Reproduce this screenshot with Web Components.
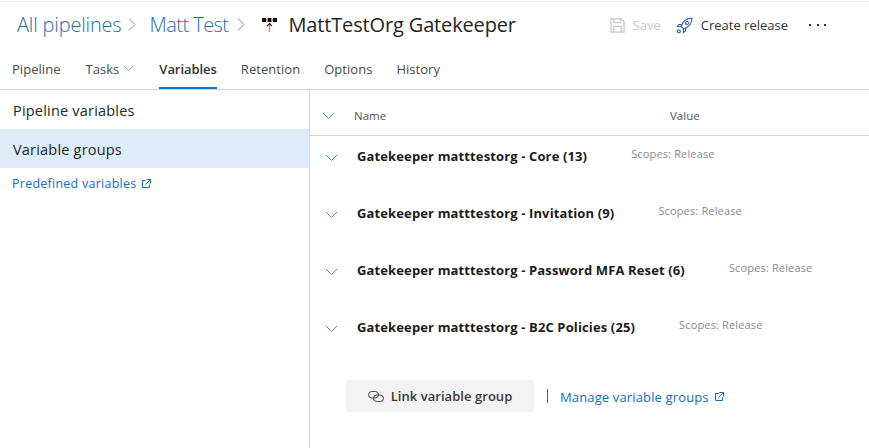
<!DOCTYPE html>
<html>
<head>
<meta charset="utf-8">
<title>MattTestOrg Gatekeeper</title>
<style>
  html, body { margin: 0; padding: 0; background: #fff; }
  body { font-family: "Open Sans", "Noto Sans", sans-serif; color: #212121; width: 869px; height: 448px; overflow: hidden; }
</style>
</head>
<body>
<pipeline-page></pipeline-page>

<script>
const EXTERNAL_ICON = `<svg width="9" height="9" viewBox="0 0 9 9" fill="none" stroke="#106ebe" stroke-width="1"><path d="M3.5 1.5H.5v7h7v-3M4.5 .5h4v4M8.5 .5L3.5 5.5"/></svg>`;
const CRUMB_CHEVRON = `<svg width="8" height="13" viewBox="0 0 8 13" fill="none" stroke="#8a8a8a"><path d="M1 .5l6 6-6 6"/></svg>`;

class PipelineHeader extends HTMLElement {
    connectedCallback() {
        this.attachShadow({ mode: 'open' });
        this.shadowRoot.innerHTML = `
            <style>
                :host { display: flex; align-items: center; height: 44px; margin-top: 1px; padding: 0 43px 6px 17px; border-top: 1px solid #ececec; }
                .crumb { font-size: 20px; font-weight: 300; color: #1f6ea8; letter-spacing: -0.17px; }
                .crumb.matt { letter-spacing: -0.55px; }
                .sep { display: flex; }
                .title { font-size: 20px; letter-spacing: -0.15px; color: #252525; }
                .pipe-icon { margin: 0 11px 0 0; display: flex; }
                .actions { margin-left: auto; display: flex; align-items: center; font-size: 13px; margin-top: 2px; }
                .save { color: #c8c8c8; margin-left: 8px; margin-right: 15px; }
                .create { color: #333; margin-left: 8px; margin-right: 21px; }
                .more { display: flex; gap: 5.5px; }
                .more i { width: 2px; height: 2px; background: #333; display: block; }
                svg { display: block; }
            </style>
            <span class="crumb">All pipelines</span>
            <span class="sep" style="margin: 0 14px 0 6px">${CRUMB_CHEVRON}</span>
            <span class="crumb matt">Matt Test</span>
            <span class="sep" style="margin: 0 17px 0 9px">${CRUMB_CHEVRON}</span>
            <span class="pipe-icon"><svg width="15" height="15" viewBox="0 0 15 15">
                <path d="M0 1h4v4H0zM5.500 1h4v4h-4zM11 1h4v4h-4z" fill="#111"/>
                <path d="M4 2h1.500v2H4zM9.500 2H11v2H9.500z" fill="#e8a33d"/>
                <path d="M7.500 6.500V15" stroke="#d98a1f" stroke-width="1.300"/>
                <path d="M5 9l2.500-2.500L10 9" fill="none" stroke="#222" stroke-width="1.100"/>
            </svg></span>
            <span class="title">MattTestOrg Gatekeeper</span>
            <div class="actions">
                <svg width="15" height="15" viewBox="0 0 16 16" fill="none" stroke="#c8c8c8" stroke-width="1.400"><path d="M1 1h11l3 3v11H1z"/><path d="M4 1v4h7V1M4 15V9h8v6"/></svg>
                <span class="save">Save</span>
                <svg width="17" height="17" viewBox="0 0 17 17" fill="none" stroke="#1d5fbf" stroke-width="1.100"><path d="M5 9.500C6.500 5 10 1.500 16 1c-.3 6-3.800 9.500-8.300 11z"/><circle cx="11" cy="6" r="1.500"/><path d="M5.800 7.500H3L1.500 9.500 5 9.800M9.500 11.300V14l-2 1.500-.3-3.500"/><circle cx="2.800" cy="14.200" r="1.500"/></svg>
                <span class="create">Create release</span>
                <span class="more"><i></i><i></i><i></i></span>
            </div>
        `;
    }
}

class PipelineTabs extends HTMLElement {
    connectedCallback() {
        this.attachShadow({ mode: 'open' });
        this.shadowRoot.innerHTML = `
            <style>
                :host { display: flex; height: 37px; padding-left: 12px; border-bottom: 1px solid #d4d4d4; font-size: 13px; letter-spacing: 0.04px; color: #4a4a4a; }
                a { display: flex; align-items: center; margin-right: 24px; color: inherit; padding-bottom: 4px; box-sizing: border-box; height: 37px; }
                a.active { font-weight: 600; color: #333; border-bottom: 2px solid #0078d4; letter-spacing: -0.05px; padding-bottom: 2px; }
                a.tasks { margin-left: 1px; margin-right: 25px; }
                svg { margin-left: 4px; }
            </style>
            <a>Pipeline</a>
            <a class="tasks">Tasks<svg width="11" height="7" viewBox="0 0 11 7" fill="none" stroke="#a6a6a6"><path d="M1 1l4.500 4.500L10 1"/></svg></a>
            <a class="active">Variables</a>
            <a>Retention</a>
            <a>Options</a>
            <a>History</a>
        `;
    }
}

class VarSidebar extends HTMLElement {
    connectedCallback() {
        this.attachShadow({ mode: 'open' });
        this.shadowRoot.innerHTML = `
            <style>
                :host { display: block; width: 310px; height: 358px; padding-top: 1px; box-sizing: border-box; border-right: 1px solid #d4d4d4; }
                .item { height: 38px; display: flex; align-items: center; padding-left: 13px; font-size: 14.500px; letter-spacing: 0.2px; color: #252525; }
                .item.on { background: #deecf9; height: 39px; padding-top: 1px; box-sizing: border-box; }
                .link { display: flex; align-items: center; margin: 7px 0 0 12px; font-size: 12.500px; color: #106ebe; letter-spacing: 0.25px; height: 16px; }
                svg { margin-left: 6px; }
            </style>
            <div class="item">Pipeline variables</div>
            <div class="item on">Variable groups</div>
            <a class="link">Predefined variables ${EXTERNAL_ICON}</a>
        `;
    }
}

class VarGroup extends HTMLElement {
    connectedCallback() {
        const color = this.getAttribute('tone') === 'rose' ? '#b0708a' : '#3f8fd0';
        this.attachShadow({ mode: 'open' });
        this.shadowRoot.innerHTML = `
            <style>
                :host { display: flex; align-items: flex-start; height: 57px; padding-left: 15px; box-sizing: border-box; }
                svg { display: block; margin-top: 6px; }
                .name { margin-left: 19px; font-size: 13px; font-weight: 700; color: #1a1a1a; letter-spacing: 0.13px; line-height: 17px; }
                .scope { margin-left: 44px; font-size: 11px; color: #8a8a8a; letter-spacing: 0.15px; line-height: 14px; margin-top: -1px; }
            </style>
            <svg width="13" height="8" viewBox="0 0 13 8" fill="none" stroke="${color}"><path d="M1 1l5.500 5.500L12 1"/></svg>
            <span class="name">${this.getAttribute('name')}</span>
            <span class="scope">Scopes: Release</span>
        `;
    }
}

class VarGroups extends HTMLElement {
    connectedCallback() {
        this.attachShadow({ mode: 'open' });
        this.shadowRoot.innerHTML = `
            <style>
                :host { display: block; flex: 1; }
                .head { display: flex; align-items: center; height: 39px; padding-top: 6px; border-bottom: 1px solid #d4d4d4; padding-left: 12px; font-size: 11.500px; color: #555; }
                .head svg { margin-top: 1px; }
                .head .n { margin-left: 19px; width: 316px; }
                .list { padding-top: 12px; }
                .foot { display: flex; align-items: center; margin-left: 36px; margin-top: 4px; }
                button { all: unset; box-sizing: border-box; width: 188px; height: 32px; background: #f3f3f3; display: flex; align-items: center; justify-content: center; gap: 7px; font: 600 13px "Open Sans", sans-serif; letter-spacing: 0.05px; color: #3a3a3a; }
                .bar { width: 1px; height: 14px; background: #106ebe; margin: 0 12px 0 13px; }
                a { color: #106ebe; font-size: 13px; letter-spacing: 0.14px; display: flex; align-items: center; gap: 6px; padding-top: 1px; }
                svg { display: block; }
            </style>
            <div class="head">
                <svg width="13" height="8" viewBox="0 0 13 8" fill="none" stroke="#3f8fd0"><path d="M1 1l5.500 5.500L12 1"/></svg>
                <span class="n">Name</span><span>Value</span>
            </div>
            <div class="list">
                <var-group name="Gatekeeper matttestorg - Core (13)"></var-group>
                <var-group tone="rose" name="Gatekeeper matttestorg - Invitation (9)"></var-group>
                <var-group name="Gatekeeper matttestorg - Password MFA Reset (6)"></var-group>
                <var-group tone="rose" name="Gatekeeper matttestorg - B2C Policies (25)"></var-group>
            </div>
            <div class="foot">
                <button><svg width="16" height="11" viewBox="0 0 16 11" fill="none" stroke="#444"><rect x=".5" y=".5" width="10" height="6.500" rx="3.250"/><rect x="5.500" y="4" width="10" height="6.500" rx="3.250"/></svg>Link variable group</button>
                <span class="bar"></span>
                <a>Manage variable groups ${EXTERNAL_ICON}</a>
            </div>
        `;
    }
}

class PipelinePage extends HTMLElement {
    connectedCallback() {
        this.attachShadow({ mode: 'open' });
        this.shadowRoot.innerHTML = `
            <style>
                :host { display: block; width: 869px; height: 448px; }
                .body { display: flex; }
            </style>
            <pipeline-header></pipeline-header>
            <pipeline-tabs></pipeline-tabs>
            <div class="body"><var-sidebar></var-sidebar><var-groups></var-groups></div>
        `;
    }
}

customElements.define('pipeline-header', PipelineHeader);
customElements.define('pipeline-tabs', PipelineTabs);
customElements.define('var-sidebar', VarSidebar);
customElements.define('var-group', VarGroup);
customElements.define('var-groups', VarGroups);
customElements.define('pipeline-page', PipelinePage);
</script>
</body>
</html>
